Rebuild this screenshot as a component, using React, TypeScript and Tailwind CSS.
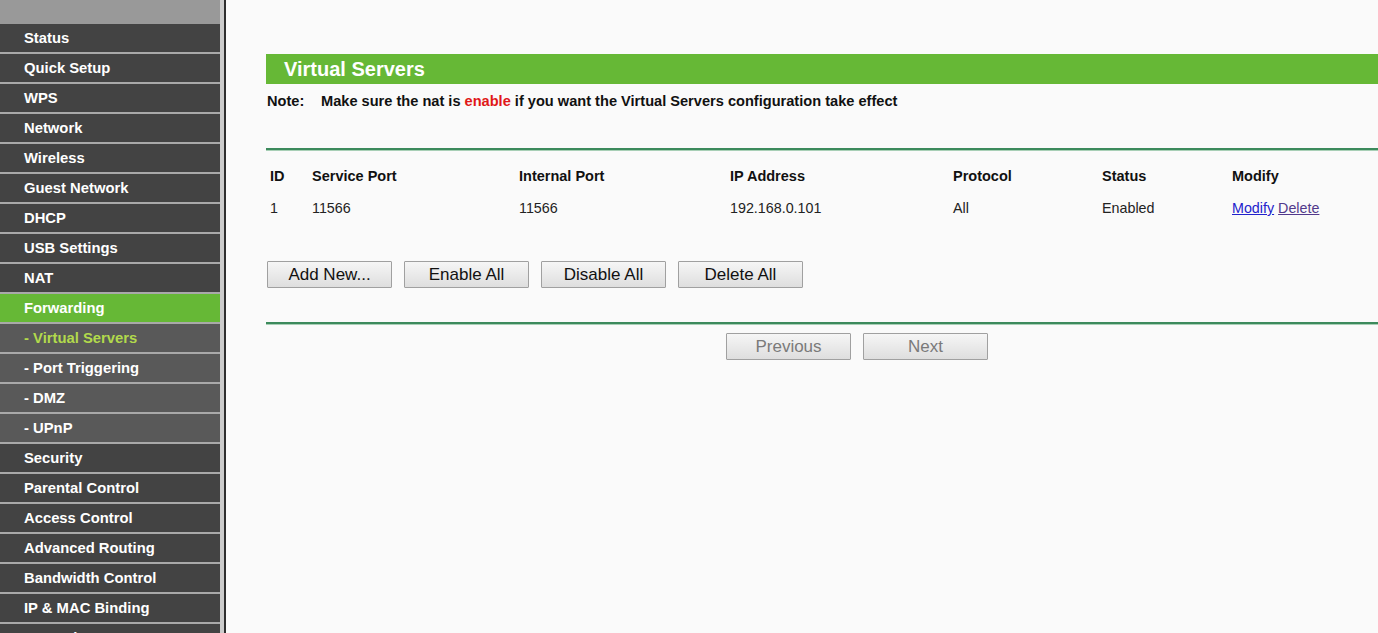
import React from "react";

const menu: { label: string; kind?: "active" | "sub" | "subactive" }[] = [
  { label: "Status" },
  { label: "Quick Setup" },
  { label: "WPS" },
  { label: "Network" },
  { label: "Wireless" },
  { label: "Guest Network" },
  { label: "DHCP" },
  { label: "USB Settings" },
  { label: "NAT" },
  { label: "Forwarding", kind: "active" },
  { label: "- Virtual Servers", kind: "subactive" },
  { label: "- Port Triggering", kind: "sub" },
  { label: "- DMZ", kind: "sub" },
  { label: "- UPnP", kind: "sub" },
  { label: "Security" },
  { label: "Parental Control" },
  { label: "Access Control" },
  { label: "Advanced Routing" },
  { label: "Bandwidth Control" },
  { label: "IP & MAC Binding" },
  { label: "Dynamic DNS" },
];

function MenuItem({ label, kind }: { label: string; kind?: string }) {
  let cls = "bg-[#434343] text-white";
  if (kind === "active") cls = "bg-[#66b836] text-white";
  if (kind === "sub") cls = "bg-[#595959] text-white";
  if (kind === "subactive") cls = "bg-[#595959] text-[#b2d94c]";
  return (
    <div className={`h-[28px] mb-[2px] shrink-0 flex items-center pl-[24px] font-bold text-[14.8px] leading-none ${cls}`}>
      {label}
    </div>
  );
}

const cols = ["w-[42px]", "w-[207px]", "w-[211px]", "w-[223px]", "w-[149px]", "w-[130px]", "flex-1"];

function Btn({ children, disabled }: { children: React.ReactNode; disabled?: boolean }) {
  return (
    <button
      className={`w-[125px] h-[27px] border border-[#a0a0a0] rounded-[1px] bg-gradient-to-b from-[#f6f6f6] to-[#dedede] text-[17px] leading-none ${
        disabled ? "text-[#7a7a7a]" : "text-[#111]"
      }`}
    >
      {children}
    </button>
  );
}

export default function App() {
  return (
    <div
      className="flex h-[633px] w-[1378px] overflow-hidden bg-[#fafafa]"
      style={{ fontFamily: '"Liberation Sans", Arial, sans-serif' }}
    >
      <div className="flex shrink-0">
        <div className="w-[220px] flex flex-col bg-[#a9a9a9]">
          <div className="h-[24px] shrink-0 bg-[#999999]" />
          {menu.map((m) => (
            <MenuItem key={m.label} label={m.label} kind={m.kind} />
          ))}
        </div>
        <div className="w-[4px] bg-[#cbcbcb]" />
        <div className="w-[2px] bg-[#2e2e2e]" />
      </div>

      <div className="flex-1 pl-[40px] pt-[54px]">
        <div className="h-[30px] bg-[#66b836] flex items-center pl-[18px] text-white font-bold text-[20px]">
          Virtual Servers
        </div>
        <div className="flex mt-[9px] font-bold text-[14.6px] text-[#111] leading-[16px] pl-[1px]">
          <span className="w-[54px]">Note:</span>
          <span>
            Make sure the nat is <span className="text-[#e01818]">enable</span> if you want the Virtual Servers
            configuration take effect
          </span>
        </div>

        <div className="mt-[39px] h-[2px] bg-[#3c8a5c] border-b border-[#a8cfb6] box-content" />

        <div className="flex mt-[17px] pl-[4px] font-bold text-[14.5px] text-[#111] leading-[17px]">
          {["ID", "Service Port", "Internal Port", "IP Address", "Protocol", "Status", "Modify"].map((h, i) => (
            <div key={h} className={cols[i]}>
              {h}
            </div>
          ))}
        </div>
        <div className="flex mt-[15px] pl-[4px] text-[14.3px] text-[#222] leading-[17px]">
          <div className={cols[0]}>1</div>
          <div className={cols[1]}>11566</div>
          <div className={cols[2]}>11566</div>
          <div className={cols[3]}>192.168.0.101</div>
          <div className={cols[4]}>All</div>
          <div className={cols[5]}>Enabled</div>
          <div className={cols[6]}>
            <a className="underline text-[#2222cc] cursor-pointer">Modify</a>{" "}
            <a className="underline text-[#52398c] cursor-pointer">Delete</a>
          </div>
        </div>

        <div className="flex gap-[12px] mt-[44px] pl-[1px]">
          <Btn>Add New...</Btn>
          <Btn>Enable All</Btn>
          <Btn>Disable All</Btn>
          <Btn>Delete All</Btn>
        </div>

        <div className="mt-[34px] h-[2px] bg-[#3c8a5c] border-b border-[#a8cfb6] box-content" />

        <div className="flex gap-[12px] mt-[8px] pl-[460px]">
          <Btn disabled>Previous</Btn>
          <Btn disabled>Next</Btn>
        </div>
      </div>
    </div>
  );
}
